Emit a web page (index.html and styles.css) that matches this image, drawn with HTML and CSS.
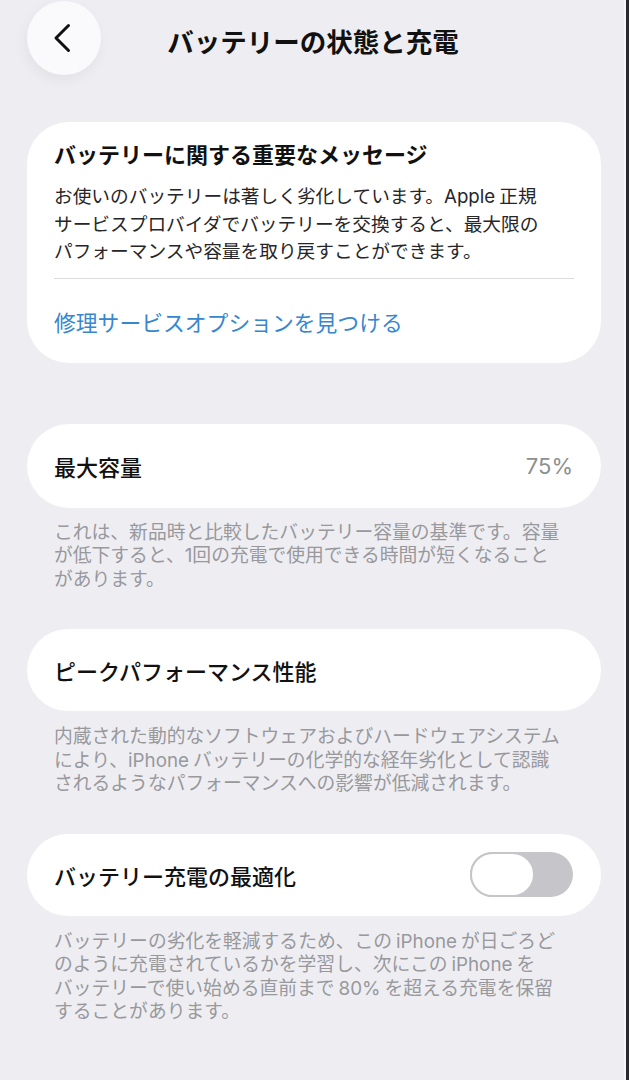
FILE: index.html
```html
<!DOCTYPE html>
<html lang="ja">
<head>
<meta charset="utf-8">
<title>バッテリーの状態と充電</title>
<link rel="stylesheet" href="styles.css">
</head>
<body>
<div class="screen">
  <header class="header">
    <div class="header-left">
      <button class="back" aria-label="戻る">
        <svg width="20" height="30" viewBox="0 0 20 30"><path d="M15.5 2.5 L3 15 L15.5 27.5" fill="none" stroke="#111" stroke-width="3" stroke-linecap="round" stroke-linejoin="round"/></svg>
      </button>
    </div>
    <h1 class="title">バッテリーの状態と充電</h1>
    <div></div>
  </header>

  <section class="card message">
    <h2 class="card-title">バッテリーに関する重要なメッセージ</h2>
    <p class="card-body">お使いのバッテリーは著しく劣化しています。Apple<span class="gap"></span>正規<br>サービスプロバイダでバッテリーを交換すると、最大限の<br>パフォーマンスや容量を取り戻すことができます。</p>
    <div class="divider"></div>
    <a class="link" href="#">修理サービスオプションを見つける</a>
  </section>

  <section class="card row row-first">
    <span class="row-label">最大容量</span>
    <span class="row-value">75%</span>
  </section>
  <p class="footnote">これは、新品時と比較したバッテリー容量の基準です。容量<br>が低下すると、1回の充電で使用できる時間が短くなること<br>があります。</p>

  <section class="card row">
    <span class="row-label">ピークパフォーマンス性能</span>
  </section>
  <p class="footnote">内蔵された動的なソフトウェアおよびハードウェアシステム<br>により、iPhone<span class="gap"></span>バッテリーの化学的な経年劣化として認識<br>されるようなパフォーマンスへの影響が低減されます。</p>

  <section class="card row">
    <span class="row-label">バッテリー充電の最適化</span>
    <span class="toggle"><span class="knob"></span></span>
  </section>
  <p class="footnote">バッテリーの劣化を軽減するため、この<span class="gap"></span>iPhone<span class="gap"></span>が日ごろど<br>のように充電されているかを学習し、次にこの<span class="gap"></span>iPhone<span class="gap"></span>を<br>バッテリーで使い始める直前まで<span class="gap"></span>80%<span class="gap"></span>を超える充電を保留<br>することがあります。</p>
</div>
</body>
</html>
```

FILE: styles.css
```css
html, body {
  margin: 0;
  padding: 0;
  background: #2b2b2f;
}

body {
  font-family: Inter, "Noto Sans CJK JP", "Noto Sans", sans-serif;
  color: #1c1c1e;
}

.screen {
  width: 626px;
  min-height: 1080px;
  background: #eeeef2;
  box-shadow: inset -2px 0 0 #f7f7f9;
  overflow: hidden;
}

.gap {
  display: inline-block;
  width: 4px;
}

.header {
  display: grid;
  grid-template-columns: 1fr auto 1fr;
  align-items: center;
  height: 76px;
  box-sizing: border-box;
}

.header-left {
  padding-left: 27px;
  display: flex;
}

.back {
  width: 74px;
  height: 74px;
  border-radius: 50%;
  border: none;
  background: #fafafc;
  box-shadow: -2px 5px 14px rgba(0, 0, 0, 0.05);
  display: flex;
  align-items: center;
  justify-content: center;
  padding: 0 3px 0 0;
}

.title {
  margin: 0;
  padding-top: 4px;
  font-size: 26.5px;
  font-weight: 700;
  color: #111;
  white-space: nowrap;
}

.card {
  background: #ffffff;
  margin: 0 25px 0 27px;
}

.message {
  margin-top: 46px;
  border-radius: 42px;
  padding: 19px 27px 26px 27px;
}

.card-title {
  margin: 0;
  font-size: 22px;
  line-height: 28px;
  font-weight: 700;
  color: #111;
  white-space: nowrap;
}

.card-body {
  margin: 14px 0 0 0;
  font-size: 18.7px;
  line-height: 27.5px;
  color: #262628;
  white-space: nowrap;
}

.divider {
  height: 1px;
  background: #dcdce0;
  margin-top: 12px;
}

.link {
  display: block;
  margin-top: 30px;
  font-size: 21.8px;
  line-height: 28px;
  color: #3787d0;
  text-decoration: none;
  white-space: nowrap;
}

.row {
  display: flex;
  align-items: center;
  justify-content: space-between;
  height: 82px;
  border-radius: 41px;
  padding: 0 28px 0 27px;
  margin-top: 38px;
}

.row-first {
  margin-top: 61px;
  height: 84px;
  border-radius: 42px;
}

.row-label {
  font-size: 22px;
  font-weight: 500;
  color: #111;
  white-space: nowrap;
}

.row-value {
  font-size: 22px;
  color: #8e8e93;
}

.footnote {
  margin: 14px 0 0 0;
  padding-left: 54px;
  font-size: 18.8px;
  line-height: 23.5px;
  color: #98989d;
  white-space: nowrap;
}

.row-first + .footnote {
  margin-top: 13px;
}

.toggle {
  display: flex;
  width: 103px;
  height: 45px;
  border-radius: 23px;
  background: #c6c6ca;
}

.knob {
  width: 65px;
  height: 45px;
  box-sizing: border-box;
  border-radius: 23px;
  border: 2.5px solid #c6c6ca;
  background: #ffffff;
}
```
